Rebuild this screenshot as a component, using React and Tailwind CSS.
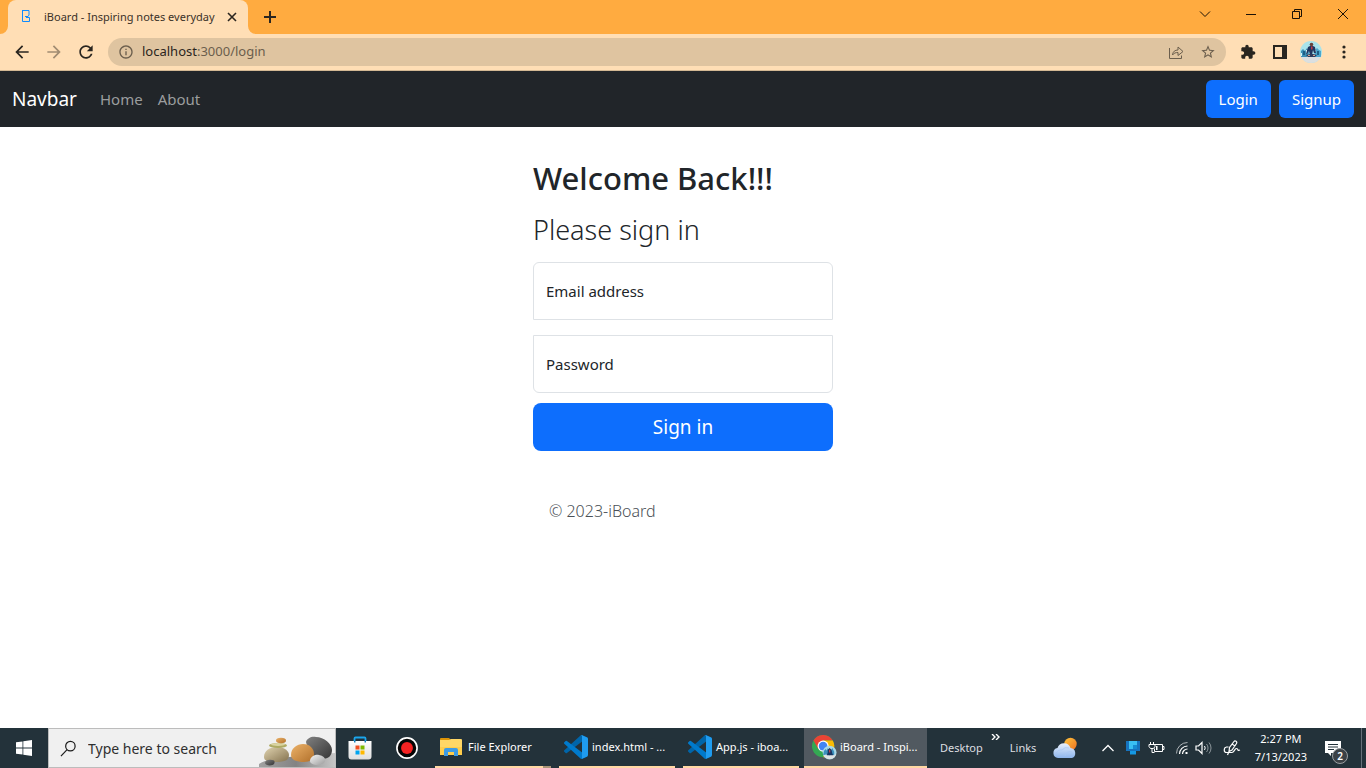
import React from "react";

const PATHS = {
  back: "M20 11H7.83l5.59-5.59L12 4l-8 8 8 8 1.41-1.41L7.83 13H20v-2z",
  forward: "M12 4l-1.41 1.41L16.17 11H4v2h12.17l-5.58 5.59L12 20l8-8z",
  reload:
    "M17.65 6.35C16.2 4.9 14.21 4 12 4c-4.42 0-7.99 3.58-7.99 8s3.57 8 7.99 8c3.73 0 6.84-2.55 7.73-6h-2.08c-.82 2.33-3.04 4-5.65 4-3.31 0-6-2.69-6-6s2.69-6 6-6c1.66 0 3.14.69 4.22 1.78L13 11h7V4l-2.35 2.35z",
  info: "M11 7h2v2h-2zm0 4h2v6h-2zm1-9C6.48 2 2 6.48 2 12s4.48 10 10 10 10-4.48 10-10S17.52 2 12 2zm0 18c-4.41 0-8-3.59-8-8s3.59-8 8-8 8 3.59 8 8-3.59 8-8 8z",
  star: "M22 9.24l-7.19-.62L12 2 9.19 8.63 2 9.24l5.46 4.73L5.82 21 12 17.27 18.18 21l-1.63-7.03L22 9.24zM12 15.4l-3.76 2.27 1-4.28-3.32-2.88 4.38-.38L12 6.1l1.71 4.04 4.38.38-3.32 2.88 1 4.28L12 15.4z",
  puzzle:
    "M20.5 11H19V7c0-1.1-.9-2-2-2h-4V3.5C13 2.12 11.88 1 10.5 1S8 2.12 8 3.5V5H4c-1.1 0-1.99.9-1.99 2v3.8H3.5c1.49 0 2.7 1.21 2.7 2.7s-1.21 2.7-2.7 2.7H2V20c0 1.1.9 2 2 2h3.8v-1.5c0-1.49 1.21-2.7 2.7-2.7 1.49 0 2.7 1.21 2.7 2.7V22H17c1.1 0 2-.9 2-2v-4h1.5c1.38 0 2.5-1.12 2.5-2.5S21.88 11 20.5 11z",
};

function Glyph({ name, className }) {
  return (
    <svg viewBox="0 0 24 24" className={className} fill="currentColor" aria-hidden="true">
      <path d={PATHS[name]} />
    </svg>
  );
}

function Avatar({ className }) {
  return (
    <svg viewBox="0 0 22 22" className={className} aria-hidden="true">
      <clipPath id="avatar-clip">
        <circle cx="11" cy="11" r="11" />
      </clipPath>
      <g clipPath="url(#avatar-clip)">
        <rect width="22" height="22" fill="#a9e3ea" />
        <rect y="14" width="22" height="8" fill="#dcdfe0" />
        <path d="M1 10l2-2 2 2 2-3 2 5-2 4H1z" fill="#3b8fb5" />
        <path d="M21 10l-2-1-2-2-3 3 1 6h6z" fill="#4ba6cc" />
        <path d="M3 10h2v4H3zM17 10h2v4h-2z" fill="#1f5f86" />
        <path d="M1 12h1v3H1zM6 9h1v4H6zM15 9h1v3h-1z" fill="#d9f5f7" />
        <circle cx="11.500" cy="3.500" r="1.800" fill="#684239" />
        <path d="M8 6l2-1h3l2 1 1 6h-2l-1-3-1 5h-2l-1-4-2 3H6z" fill="#20365f" />
        <path d="M11 5.500h1.500v3H11z" fill="#c03a45" />
        <path d="M6 14l4-1h3l4 1-2 2H8z" fill="#2d3c5d" />
        <path d="M8 14h2v1H8zM13 14h2v1h-2z" fill="#d4a28d" />
      </g>
    </svg>
  );
}

function TitleBar() {
  return (
    <header className="flex h-[34px] items-end bg-[#ffab40] pl-2">
      <div className="relative flex h-full w-60 items-center rounded-t-lg bg-[#ffdeb5] pl-3 pr-2">
        <svg viewBox="0 0 8 8" className="absolute bottom-0 -left-2 size-2" aria-hidden="true">
          <path d="M8 0v8H0a8 8 0 0 0 8-8z" fill="#ffdeb5" />
        </svg>
        <svg viewBox="0 0 8 8" className="absolute bottom-0 -right-2 size-2" aria-hidden="true">
          <path d="M0 0v8h8a8 8 0 0 1-8-8z" fill="#ffdeb5" />
        </svg>
        <svg viewBox="0 0 14 14" className="size-[14px] shrink-0" fill="none" stroke="#0d8bff" aria-hidden="true">
          <path d="M2.500 .5h6.500v4.500l-1 1.500h-3M2.500 0v11.500h7V7.500H6M2 .5h1" />
        </svg>
        <span className="ml-2.5 flex-1 whitespace-nowrap text-[11px] text-[#3a3128]">
          iBoard - Inspiring notes everyday
        </span>
        <button aria-label="Close tab" className="flex size-4 items-center justify-center">
          <svg viewBox="0 0 10 10" className="size-[10px]" stroke="#2b2620" strokeWidth="1.600">
            <path d="M1 1l8 8M9 1L1 9" />
          </svg>
        </button>
      </div>
      <button aria-label="New tab" className="ml-3.5 flex h-full w-4 items-center justify-center">
        <svg viewBox="0 0 12 12" className="size-3" stroke="#2b2620" strokeWidth="2">
          <path d="M6 0v12M0 6h12" />
        </svg>
      </button>
      <div className="ml-auto flex h-full pb-1.5 text-[#1c1206]">
        <button aria-label="Search tabs" className="flex w-[46px] items-center justify-center">
          <svg viewBox="0 0 12 12" className="size-3" fill="none" stroke="currentColor">
            <path d="M1 3.500l5 5 5-5" />
          </svg>
        </button>
        <button aria-label="Minimize" className="flex w-[46px] items-center justify-center">
          <svg viewBox="0 0 10 10" className="size-[10px]" stroke="currentColor">
            <path d="M0 5.500h10" />
          </svg>
        </button>
        <button aria-label="Restore" className="flex w-[46px] items-center justify-center">
          <svg viewBox="0 0 10 10" className="size-[10px]" fill="none" stroke="currentColor">
            <path d="M.5 2.500h7v7h-7zM2.500 2.500v-2h7v7h-2" />
          </svg>
        </button>
        <button aria-label="Close window" className="flex w-[46px] items-center justify-center">
          <svg viewBox="0 0 10 10" className="size-[10px]" stroke="currentColor">
            <path d="M0 0l10 10M10 0L0 10" />
          </svg>
        </button>
      </div>
    </header>
  );
}

function Toolbar() {
  return (
    <div className="flex h-[37px] items-center border-b border-[#d3b894] bg-[#ffdeb5] pl-3 text-[#29251f]">
      <button aria-label="Back" className="mr-3">
        <Glyph name="back" className="size-5" />
      </button>
      <button aria-label="Forward" className="mr-3 text-[#a18c72]">
        <Glyph name="forward" className="size-5" />
      </button>
      <button aria-label="Reload" className="mr-3">
        <Glyph name="reload" className="size-5" />
      </button>
      <div className="flex h-7 flex-1 items-center rounded-full bg-[#dfc4a0] pl-2.5 pr-2.5 text-[#6b5e4d]">
        <Glyph name="info" className="size-4" />
        <a href="#login" className="ml-2 flex-1 text-[13px]">
          <span className="text-[#2b251d]">localhost</span>:3000/login
        </a>
        <button aria-label="Share" className="mr-4">
          <svg viewBox="0 0 16 16" className="size-4" fill="none" stroke="currentColor">
            <path d="M1.500 4v10.500h12v-3" />
            <path d="M4.500 11c.3-3.500 2.500-5 5.500-5V3l5 4.500-5 4v-3c-2.500 0-4 .5-5.500 2.500z" strokeLinejoin="round" />
          </svg>
        </button>
        <button aria-label="Bookmark this page">
          <Glyph name="star" className="size-4" />
        </button>
      </div>
      <button aria-label="Extensions" className="ml-3.5">
        <Glyph name="puzzle" className="size-4" />
      </button>
      <button aria-label="Side panel" className="ml-4">
        <svg viewBox="0 0 16 16" className="size-4" aria-hidden="true">
          <path d="M1 1h14v14H1zM3 3v10h7V3z" fill="currentColor" fillRule="evenodd" />
        </svg>
      </button>
      <button aria-label="Profile" className="ml-3">
        <Avatar className="size-[22px]" />
      </button>
      <button aria-label="Menu" className="mr-3 ml-3">
        <svg viewBox="0 0 20 20" className="size-5" fill="currentColor">
          <circle cx="10" cy="5" r="1.600" />
          <circle cx="10" cy="10" r="1.600" />
          <circle cx="10" cy="15" r="1.600" />
        </svg>
      </button>
    </div>
  );
}

function SiteNav() {
  return (
    <nav className="flex h-14 items-center bg-[#212529] px-3 text-[15px]">
      <a href="#top" className="mr-[23px] text-[19px] text-white">Navbar</a>
      <a href="#home" className="mr-[15px] text-[#9b9d9e]">Home</a>
      <a href="#about" className="text-[#9b9d9e]">About</a>
      <button className="ml-auto h-[38px] rounded-md bg-[#0d6efd] px-[13px] text-white">Login</button>
      <button className="ml-2 h-[38px] rounded-md bg-[#0d6efd] px-[13px] text-white">Signup</button>
    </nav>
  );
}

function LoginForm() {
  return (
    <form className="mx-auto w-[300px] pt-[31px] text-[#212529]" onSubmit={(e) => e.preventDefault()}>
      <h1 className="mb-3 whitespace-nowrap text-[31px] leading-10 font-medium">Welcome Back!!!</h1>
      <h2 className="mb-3 text-[27px] leading-10 font-light">Please sign in</h2>
      <div className="mb-[15px] grid h-[58px] grid-cols-1 grid-rows-1 items-center">
        <input
          id="email"
          type="email"
          className="col-start-1 row-start-1 h-full w-full rounded-t-md border border-[#dee2e6] bg-white px-3 text-[15px]"
        />
        <label htmlFor="email" className="col-start-1 row-start-1 justify-self-start pl-[13px] text-[15px]">
          Email address
        </label>
      </div>
      <div className="mb-2.5 grid h-[58px] grid-cols-1 grid-rows-1 items-center">
        <input
          id="password"
          type="password"
          className="col-start-1 row-start-1 h-full w-full rounded-b-md border border-[#dee2e6] bg-white px-3 text-[15px]"
        />
        <label htmlFor="password" className="col-start-1 row-start-1 justify-self-start pl-[13px] text-[15px]">
          Password
        </label>
      </div>
      <button type="submit" className="h-12 w-full rounded-lg bg-[#0d6efd] text-[19px] text-white">
        Sign in
      </button>
      <p className="mt-12 pl-4 text-base font-light text-[#4a5056]">© 2023-iBoard</p>
    </form>
  );
}

function VsCodeIcon() {
  return (
    <svg viewBox="0 0 100 100" className="size-6 shrink-0" aria-hidden="true">
      <path d="M96.461 10.796L75.857.876A8.500 8.500 0 0 0 68.750 2.083L1.299 63.583a4.170 4.170 0 0 0 .004 6.162l5.510 5.009a4.170 4.170 0 0 0 5.321.236l81.227-61.620C96.086 11.303 100 13.246 100 16.667v-.24a6.250 6.250 0 0 0-3.539-5.631z" fill="#0065a9" />
      <path d="M96.461 89.204L75.857 99.124a8.500 8.500 0 0 1-7.107-1.207L1.299 36.417a4.170 4.170 0 0 1 .004-6.162l5.510-5.009a4.170 4.170 0 0 1 5.321-.236l81.227 61.620C96.086 88.697 100 86.754 100 83.333v.24a6.250 6.250 0 0 1-3.539 5.631z" fill="#007acc" />
      <path d="M75.858 99.126c-2.386 1.148-5.236.663-7.108-1.209C71.056 100.223 75 98.590 75 95.328V4.672C75 1.410 71.056-.223 68.750 2.083 70.622.211 73.472-.274 75.858.874l20.601 9.907A6.250 6.250 0 0 1 100 16.413v67.174a6.250 6.250 0 0 1-3.541 5.633z" fill="#1f9cf0" />
    </svg>
  );
}

function FolderIcon() {
  return (
    <svg viewBox="0 0 24 20" className="h-5 w-6 shrink-0" aria-hidden="true">
      <path d="M0 2a1 1 0 0 1 1-1h8l2 2H0z" fill="#dc9407" />
      <path d="M0 3h9l2-1h10a1 1 0 0 1 1 1v15H0z" fill="#ffd766" />
      <path d="M0 10h22v8H0z" fill="#ffcd4b" />
      <path d="M4 19v-6a2 2 0 0 1 2-2h10a2 2 0 0 1 2 2v6h-4v-4H8v4z" fill="#3d9be4" />
    </svg>
  );
}

function ChromeIcon() {
  return (
    <svg viewBox="0 0 27 27" className="size-[25px] shrink-0" aria-hidden="true">
      <circle cx="12" cy="12" r="12" fill="#34a853" />
      <path d="M12 12L6.800 15 1.600 6A12 12 0 0 1 22.400 6H12z" fill="#ea4335" />
      <path d="M12 6h10.400A12 12 0 0 1 12 24l5.200-9z" fill="#fbbc04" />
      <circle cx="12" cy="12" r="6" fill="#fff" />
      <circle cx="12" cy="12" r="4.700" fill="#4285f4" />
      <circle cx="19" cy="19" r="7.500" fill="#a8d9e8" />
      <path d="M12 21h14a7.500 7.500 0 0 1-14 0z" fill="#dfe3e4" />
      <path d="M13 17l2-2 1 2 1-3 1 2h3l1-2 2 4v4l-3-1-2 1-4-1-3 1z" fill="#3c91bd" />
      <path d="M17 16l2-2 2 2 1 4 1 2h-7l1-3z" fill="#173562" />
      <path d="M18.500 16h1.200v3h-1.200z" fill="#cc4650" />
    </svg>
  );
}

function SearchStones() {
  return (
    <svg viewBox="0 0 76 38" className="h-[38px] w-[76px] shrink-0" aria-hidden="true">
      <defs>
        <linearGradient id="sand" x2="1" y2="1"><stop stopColor="#e0d3b0" /><stop offset="1" stopColor="#84724e" /></linearGradient>
        <linearGradient id="amber" x2="1" y2="1"><stop stopColor="#ecb269" /><stop offset="1" stopColor="#b1702b" /></linearGradient>
        <linearGradient id="slate" x2="1" y2="1"><stop stopColor="#818181" /><stop offset="1" stopColor="#343434" /></linearGradient>
        <linearGradient id="pale" x2="1" y2="1"><stop stopColor="#f4f4f4" /><stop offset="1" stopColor="#9b9b9b" /></linearGradient>
        <linearGradient id="ground" x2="1"><stop stopColor="#a3a3a3" /><stop offset=".5" stopColor="#838383" /><stop offset="1" stopColor="#c6c6c6" /></linearGradient>
      </defs>
      <path d="M-2 38c2-5 8-6 14-7l18-3 46-4v14z" fill="url(#ground)" />
      <path d="M47 13c1-4 6-6 10-5 8 0 16 7 16 13 0 5-3 9-10 9-9 0-14-8-16-17z" fill="url(#slate)" />
      <path d="M32 26c0-7 6-11 12-11 7 0 11 5 11 10s-4 8-10 8c-7 0-13-2-13-7z" fill="url(#amber)" />
      <path d="M5 28c0-6 5-10 14-10 6 0 11 4 11 8 0 5-4 7-13 7-8 0-12-1-12-5z" fill="url(#sand)" />
      <ellipse cx="19" cy="16.500" rx="9" ry="2.500" fill="#aeaa64" />
      <ellipse cx="19" cy="15.500" rx="7" ry="1.500" fill="#dad4a2" />
      <ellipse cx="22" cy="11.500" rx="5" ry="2.700" fill="url(#amber)" />
      <path d="M51 32c0-4 5-7 9-6 5 1 7 4 6 6-1 3-5 4-9 4-4-1-6-2-6-4z" fill="url(#pale)" />
      <path d="M6 34c0-3 4-4 7-3 3 0 3 2 2 4-1 2-9 2-9-1z" fill="url(#slate)" />
    </svg>
  );
}

function TaskButton({ icon, label, active, split }) {
  return (
    <button className={active ? "flex h-10 w-[123px] flex-col bg-[#515960]" : "flex h-10 w-[116px] flex-col"}>
      <span
        className={
          active
            ? "flex w-full flex-1 items-center gap-[3px] overflow-hidden pl-2 text-left text-[11px] whitespace-nowrap text-white"
            : "flex w-full flex-1 items-center gap-1 overflow-hidden pl-[5px] text-left text-[11px] whitespace-nowrap text-white"
        }
      >
        {icon}
        {label}
      </span>
      <span className="flex h-0.5 w-full bg-[#ffd8a3]">
        {split && <span className="ml-auto h-full w-2 bg-[#a99477]" />}
      </span>
    </button>
  );
}

function Taskbar() {
  return (
    <footer className="flex h-10 items-center bg-[#23323a] text-white">
      <button aria-label="Start" className="flex h-10 w-12 items-center justify-center">
        <svg viewBox="0 0 16 16" className="size-4" fill="#fff">
          <path d="M0 2.300L6.500 1.400v6.200H0zM7.300 1.300L16 0v7.600H7.300zM0 8.400h6.500v6.200L0 13.700zM7.300 8.400H16V16l-8.700-1.300z" />
        </svg>
      </button>
      <div className="flex h-10 w-72 items-center overflow-hidden border border-[#bcbcbc] bg-[#f0f0f0]">
        <label htmlFor="task-search" className="pl-[11px]">
          <svg viewBox="0 0 18 18" className="size-[17px]" fill="none" stroke="#1c1c1c" strokeWidth="1.300" aria-label="Search">
            <circle cx="11" cy="6.500" r="5" />
            <path d="M7.500 10.200L1 17" />
          </svg>
        </label>
        <input
          id="task-search"
          type="text"
          placeholder="Type here to search"
          className="h-full min-w-0 flex-1 bg-transparent pl-[11px] text-sm text-[#2f2f2f] outline-none placeholder:text-[#2f2f2f]"
        />
        <SearchStones />
      </div>
      <button aria-label="Microsoft Store" className="ml-3 flex w-6 justify-center">
        <svg viewBox="0 0 24 24" className="size-6">
          <defs>
            <linearGradient id="bag" y2="1" x2="0"><stop stopColor="#fff" /><stop offset="1" stopColor="#dedede" /></linearGradient>
          </defs>
          <path d="M6.500 6V2.500a1 1 0 0 1 1-1h9a1 1 0 0 1 1 1V6" fill="none" stroke="#1ba6ec" strokeWidth="1.800" />
          <path d="M.5 5h23v15.500a3 3 0 0 1-3 3h-17a3 3 0 0 1-3-3z" fill="url(#bag)" />
          <path d="M6 5h1.500v1.500H6zM16.500 5H18v1.500h-1.500z" fill="#157db5" />
          <path d="M7.500 9.500h4v4h-4z" fill="#f25022" />
          <path d="M12.500 9.500h4v4h-4z" fill="#7fba00" />
          <path d="M7.500 14.500h4v4h-4z" fill="#00a4ef" />
          <path d="M12.500 14.500h4v4h-4z" fill="#ffb900" />
        </svg>
      </button>
      <button aria-label="Recorder" className="mr-[17px] ml-6 flex w-[22px] justify-center">
        <svg viewBox="0 0 24 24" className="size-[22px]">
          <circle cx="12" cy="12" r="11" fill="#050505" stroke="#fff" strokeWidth="1.800" />
          <circle cx="12" cy="12" r="6.500" fill="#f52222" />
        </svg>
      </button>
      <div className="flex gap-2">
        <TaskButton icon={<FolderIcon />} label="File Explorer" split />
        <TaskButton icon={<VsCodeIcon />} label="index.html - ..." />
        <TaskButton icon={<VsCodeIcon />} label="App.js - iboa..." />
      </div>
      <div className="ml-[5px]">
        <TaskButton icon={<ChromeIcon />} label="iBoard - Inspi..." active />
      </div>
      <div className="ml-[13px] flex items-center text-[11px] text-[#dddfe1]">
        <button>Desktop</button>
        <button aria-label="More" className="mr-2.5 ml-2 pb-[22px]">
          <svg viewBox="0 0 9 6" className="h-1.5 w-[9px]" fill="none" stroke="#fff" strokeWidth="1.400">
            <path d="M1 0l3 3-3 3M5 0l3 3-3 3" />
          </svg>
        </button>
        <button>Links</button>
      </div>
      <div className="ml-auto flex items-center">
        <button aria-label="Weather" className="mr-6">
          <svg viewBox="0 0 25 22" className="h-[22px] w-[25px]">
            <defs>
              <linearGradient id="cloud" x2="0" y2="1"><stop stopColor="#e8f0fc" /><stop offset="1" stopColor="#8eb5ec" /></linearGradient>
              <linearGradient id="sun" x2="1" y2="1"><stop stopColor="#ffc43b" /><stop offset="1" stopColor="#ed7222" /></linearGradient>
            </defs>
            <circle cx="17.500" cy="7" r="6.200" fill="url(#sun)" />
            <path d="M5 21a5 5 0 0 1-.5-9.900A6.800 6.800 0 0 1 17.500 11 5.200 5.200 0 0 1 19 21z" fill="url(#cloud)" />
            <path d="M3 17a5 5 0 0 1 6-4 6 6 0 0 1 7-2M12 19a5 5 0 0 1 7-4" fill="none" stroke="#a8c5f2" strokeWidth=".7" />
          </svg>
        </button>
        <button aria-label="Show hidden icons" className="mr-3">
          <svg viewBox="0 0 12 8" className="h-2 w-3" fill="none" stroke="#fff" strokeWidth="1.300">
            <path d="M.5 7L6 1.500 11.500 7" />
          </svg>
        </button>
        <button aria-label="Display" className="mr-2">
          <svg viewBox="0 0 14 14" className="size-[14px]">
            <path d="M0 0h14v10H0z" fill="#1673bf" />
            <path d="M3 0h8v8H3z" fill="#39bff2" />
            <path d="M7 4h4v4H7z" fill="#168bd1" />
            <path d="M4 10h6v3.500H4z" fill="#1599e4" />
          </svg>
        </button>
        <button aria-label="Battery" className="mr-2.5">
          <svg viewBox="0 0 17 14" className="h-[14px] w-[17px]" fill="none" stroke="#fff">
            <path d="M7 3.500h7.500v7h-8v-3M14.500 5.500H16v3h-1.500" />
            <path d="M2.500 1v2M5.500 1v2M1 3.500h6v2l-1.500 2h-3L1 5.500zM4 7.500v4h2.500" />
            <path d="M8 5h1.500v4H8z" fill="#fff" stroke="none" />
          </svg>
        </button>
        <button aria-label="Network" className="mr-1.5">
          <svg viewBox="0 0 14 14" className="size-[14px]" fill="none" stroke="#fff">
            <path d="M1.500 12.500A11 11 0 0 1 12.500 1.500" stroke="#aeb4b8" />
            <path d="M4.500 13a8 8 0 0 1 8-8M7.500 13a5 5 0 0 1 5-5" strokeWidth="1.200" />
            <path d="M10.500 11h2v2h-2z" fill="#fff" stroke="none" />
          </svg>
        </button>
        <button aria-label="Volume" className="mr-2.5">
          <svg viewBox="0 0 18 14" className="h-[14px] w-[18px]" fill="none" stroke="#fff">
            <path d="M1 5h2.500L7 1.500v11L3.500 9H1z" strokeWidth="1.200" />
            <path d="M9.500 5a3.500 3.500 0 0 1 0 4" />
            <path d="M11.500 3a6 6 0 0 1 0 8M14 1.500a8.500 8.500 0 0 1 0 11" stroke="#8d969b" />
          </svg>
        </button>
        <button aria-label="Pen" className="mr-3.5">
          <svg viewBox="0 0 18 16" className="h-4 w-[18px]" fill="none" stroke="#fff" strokeWidth="1.200">
            <path d="M6 11.500l.5-4L11 1.500c1-1.300 3.500 0 2.500 2L9 10zM5.500 7H3.500c-3 .5-3 5.500 0 5.500H9c3 0 2-4 4.500-4s0 3 3.500 1.500M4.500 15L6 11.500M9 4l3 2" />
          </svg>
        </button>
        <div className="text-center text-[11px] leading-[18px]">
          <p>2:27 PM</p>
          <p>7/13/2023</p>
        </div>
        <button aria-label="2 notifications" className="relative ml-[17px] flex size-6 pt-1">
          <svg viewBox="0 0 17 17" className="size-[17px]" aria-hidden="true">
            <path d="M1 1h16v12H7v3l-3-3H1z" fill="#fff" />
            <path d="M4 4.500h10M4 7h10M4 9.500h6" stroke="#23323a" />
          </svg>
          <span className="absolute right-0 -bottom-1 flex size-4 items-center justify-center rounded-full border border-[#9a9fa2] bg-[#3b4146] text-[10px] font-semibold">
            2
          </span>
        </button>
        <span className="mr-1 ml-[13px] h-10 w-px bg-[#66717a]" />
      </div>
    </footer>
  );
}

export default function App() {
  return (
    <div className="flex min-h-screen flex-col bg-white font-['Noto_Sans','Open_Sans',sans-serif]">
      <TitleBar />
      <Toolbar />
      <SiteNav />
      <main className="flex-1">
        <LoginForm />
      </main>
      <Taskbar />
    </div>
  );
}
